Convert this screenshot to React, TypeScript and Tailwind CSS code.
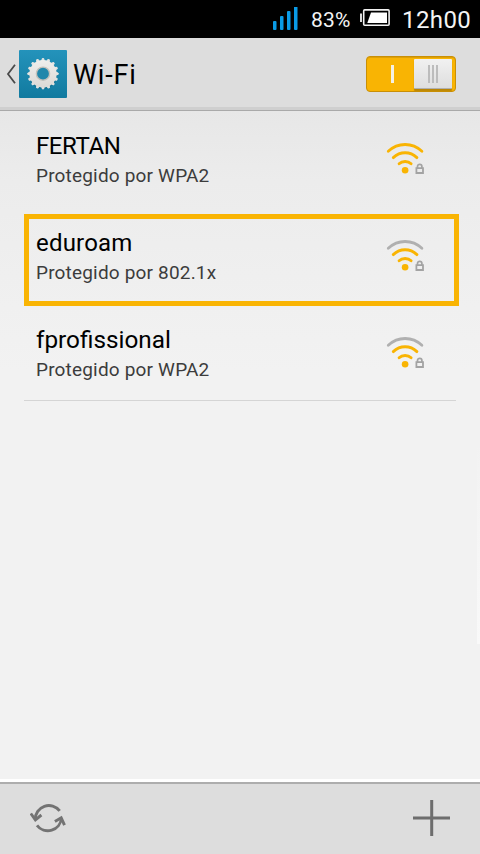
import React from 'react';

type Network = {
  name: string;
  security: string;
  fullSignal: boolean;
  nameClass: string;
  selected?: boolean;
};

const networks: Network[] = [
  { name: 'FERTAN', security: 'Protegido por WPA2', fullSignal: true, nameClass: 'text-[24px] tracking-[-0.4px]' },
  { name: 'eduroam', security: 'Protegido por 802.1x', fullSignal: false, nameClass: 'text-[24px] tracking-[0.2px]', selected: true },
  { name: 'fprofissional', security: 'Protegido por WPA2', fullSignal: false, nameClass: 'text-[24.3px]' },
];

const teeth = Array.from({ length: 16 }, (_, i) => i * 22.5);

const SignalBars = () => (
  <svg width="26" height="24" viewBox="0 0 26 24" fill="#0a9be6">
    <rect x="0" y="14" width="3.5" height="9" rx="1" />
    <rect x="7" y="9" width="3.5" height="14" rx="1" />
    <rect x="14" y="4" width="3.5" height="19" rx="1" />
    <rect x="21" y="-0.5" width="3.5" height="23.5" rx="1" />
  </svg>
);

const Battery = () => (
  <svg width="30" height="18" viewBox="0 0 30 18" fill="none">
    <rect x="3.7" y="0.9" width="25.4" height="15.4" rx="1" stroke="#f2f2f2" strokeWidth="1.6" />
    <path d="M1 4.5v8.5" stroke="#f2f2f2" strokeWidth="1.8" />
    <path d="M11 3.5h16v10.5H7.3z" fill="#fff" />
  </svg>
);

const SettingsGear = () => (
  <svg width="48" height="48" viewBox="0 0 48 48">
    <defs>
      <linearGradient id="tile" x1="0" y1="0" x2="0" y2="1">
        <stop offset="0" stopColor="#2493bb" />
        <stop offset="1" stopColor="#117a9f" />
      </linearGradient>
      <linearGradient id="gear" x1="0" y1="0" x2="0" y2="1">
        <stop offset="0" stopColor="#efeeec" />
        <stop offset="1" stopColor="#dcdad6" />
      </linearGradient>
    </defs>
    <rect width="48" height="48" rx="1" fill="url(#tile)" />
    <circle cx="24" cy="24.9" r="14.2" fill="#0d6583" opacity="0.5" />
    {teeth.map((angle) => (
      <path
        key={angle}
        d="M22.4 12L23.3 8.5h1.4l0.9 3.5z"
        fill="#e6e5e2"
        stroke="#e6e5e2"
        strokeWidth="1"
        strokeLinejoin="round"
        transform={`rotate(${angle} 24 23.7)`}
      />
    ))}
    <circle cx="24" cy="23.7" r="13.7" fill="url(#gear)" />
    <circle cx="24" cy="23.7" r="6.6" fill="#2187ab" stroke="#c3c1bb" strokeWidth="1.4" />
  </svg>
);

const WifiIcon = ({ full }: { full: boolean }) => (
  <svg width="40" height="36" viewBox="0 0 40 36" fill="none" strokeLinecap="round">
    <path d="M2.3 11.3Q9.5 4.5 19.1 4.5T35.9 11.3" stroke={full ? '#f9b403' : '#b0b0b0'} strokeWidth="2.8" />
    <path d="M7.3 17.6Q12.4 12.7 19.1 12.7T30.9 17.6" stroke="#f9b403" strokeWidth="2.9" />
    <path d="M13.1 23.7Q15.4 21.5 19.1 21.5T25.1 23.7" stroke="#f9b403" strokeWidth="2.9" />
    <circle cx="19.1" cy="30.3" r="3.3" fill="#f9b403" />
    <path d="M30.4 28.1h6.6v4.9h-6.6z" stroke="#a3a3a3" strokeWidth="1.8" />
    <path d="M31.5 28v-1.5a2.2 2.2 0 0 1 4.4 0V28" stroke="#a3a3a3" strokeWidth="1.7" />
  </svg>
);

const App: React.FC = () => {
  return (
    <div className="relative flex h-[854px] w-[480px] flex-col overflow-hidden bg-[#f2f2f2] font-['Roboto','Liberation_Sans',sans-serif] text-black">
      {/* Status bar */}
      <div className="flex h-[38px] shrink-0 items-start justify-end bg-black pr-[9px] text-[#f4f4f4]">
        <div className="mt-[6.5px] mr-[12px]">
          <SignalBars />
        </div>
        <span className="mt-[8px] w-[40px] text-[21px] leading-[24px] tracking-[0.2px] whitespace-nowrap">83%</span>
        <div className="mt-[9px] mr-[12px] ml-[9px]">
          <Battery />
        </div>
        <span className="mt-[6px] w-[69px] text-[24px] leading-[28px] tracking-[0.4px] whitespace-nowrap">12h00</span>
      </div>

      {/* Action bar */}
      <header className="flex h-[73px] shrink-0 items-start border-b border-[#a9a9a9] bg-[#dddddd] bg-[linear-gradient(to_top,#cfcfcf_3px,transparent_3px)]">
        <svg className="mt-[26px] ml-[6px]" width="13" height="20" viewBox="0 0 13 20" fill="none">
          <path d="M9 0.8L2 10l7 9.2" stroke="#4a4a4a" strokeWidth="1.8" />
        </svg>
        <div className="mt-[12px]">
          <SettingsGear />
        </div>
        <h1 className="mt-[21px] ml-[6px] text-[27px] leading-[32px] tracking-[0.85px]">Wi-Fi</h1>
        <div className="mt-[18px] mr-[24px] ml-auto flex h-[36px] w-[90px] rounded-[4px] border border-[#c98f06] bg-[#f9b403] pt-[2px] pr-[3px] shadow-[inset_0_1px_0_#dda006]">
          <div className="flex flex-1 justify-center pt-[6px] pl-[3px]">
            <div className="h-[18px] w-[3px] bg-[#f5f0e4]" />
          </div>
          <div className="flex h-[30px] w-[38px] justify-center gap-[2px] rounded-[1px] border-b border-[#b0b0b0] bg-linear-to-b from-[#f1f1f1] to-[#dedede] pt-[6px] shadow-[0_2px_1px_#b98506]">
            <div className="h-[18px] w-[2px] bg-[#bcbcbc]" />
            <div className="h-[18px] w-[2px] bg-[#bcbcbc]" />
            <div className="h-[18px] w-[2px] bg-[#bcbcbc]" />
          </div>
        </div>
      </header>

      {/* Network list */}
      <main className="flex-1 bg-[linear-gradient(to_bottom,#e7e7e7_0,#ececec_70px,#f2f2f2_260px)]">
        <ul className="mx-6">
          {networks.map((network) => (
            <li key={network.name} className="relative flex h-[97px] items-start justify-between pl-3 last:h-[96px] last:border-b last:border-[#d5d5d5]">
              {network.selected && (
                <div className="absolute top-[6px] -right-[3px] left-0 h-[92px] border-[5px] border-[#f9b403]" />
              )}
              <div>
                <div className={`mt-[20px] leading-[30px] ${network.nameClass}`}>{network.name}</div>
                <div className="mt-[3px] text-[19px] leading-[24px] tracking-[0.18px] text-[#3c3c3c]">{network.security}</div>
              </div>
              <div className="mt-[29px] mr-[30px]">
                <WifiIcon full={network.fullSignal} />
              </div>
            </li>
          ))}
        </ul>
      </main>

      {/* Scroll edge */}
      <div className="absolute top-[440px] right-0 h-[204px] w-[3px] bg-linear-to-b from-transparent to-[#f9f9f9]" />

      {/* Bottom bar */}
      <footer className="flex h-[75px] shrink-0 flex-col border-t-[3px] border-white">
        <div className="flex flex-1 items-start justify-between border-t-2 border-[#adadad] bg-[#dddddd] px-[30px]">
          <svg className="mt-[17px]" width="36" height="34" viewBox="0 0 36 34" fill="none" stroke="#737373" strokeWidth="2.9">
            <path d="M29.7 9.9A13.6 13.6 0 0 0 5.3 18.5" />
            <path d="M0.8 12.5l4.6 6.3 6-4.8" />
            <path d="M7 24.3A13.6 13.6 0 0 0 31.4 17" />
            <path d="M24.9 20.6l6.3-3.8 3.3 7.4" />
          </svg>
          <svg className="mt-[15px]" width="38" height="38" viewBox="0 0 38 38" stroke="#6d6d6d" strokeWidth="3">
            <path d="M1 19h37M19.7 1v36" />
          </svg>
        </div>
      </footer>
    </div>
  );
};

export default App;
